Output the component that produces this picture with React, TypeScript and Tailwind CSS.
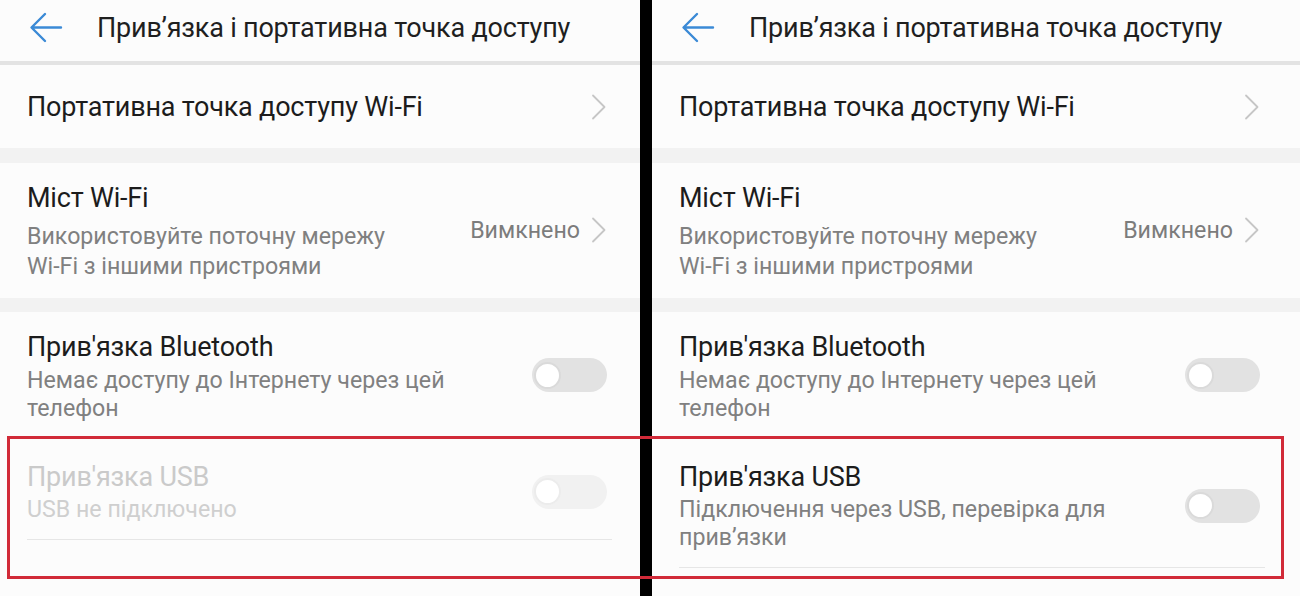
import React from "react";

function Chevron() {
  return (
    <svg width="16" height="26" viewBox="0 0 16 26" fill="none" className="shrink-0">
      <path d="M2 1.5 L13.5 13 L2 24.5" stroke="#c6c6c6" strokeWidth="1.8" strokeLinecap="round" strokeLinejoin="round" />
    </svg>
  );
}

function BackArrow() {
  return (
    <svg width="34" height="32" viewBox="0 0 34 32" fill="none" className="shrink-0">
      <path d="M32 15.5 H3 M16 2 L2.5 15.5 L16 29" stroke="#3b8ad6" strokeWidth="2.4" strokeLinecap="round" strokeLinejoin="round" />
    </svg>
  );
}

function Toggle({ disabled }: { disabled?: boolean }) {
  return (
    <div
      className={`w-[75px] h-[34px] rounded-full flex items-center pl-[2px] shrink-0 ${
        disabled ? "bg-[#f1f1f1]" : "bg-[#e2e2e2]"
      }`}
    >
      <div
        className={`w-[27px] h-[27px] rounded-full bg-white border-2 ${
          disabled ? "border-[#ececec]" : "border-[#dadada]"
        }`}
      />
    </div>
  );
}

function Panel({ right, usbEnabled }: { right: number; usbEnabled: boolean }) {
  const pr = right === 33 ? "pr-[33px]" : "pr-[40px]";
  return (
    <div className="flex flex-col h-[596px] bg-[#fcfcfc] overflow-hidden" style={{ width: right === 33 ? 640 : 648 }}>
      {/* header */}
      <div className={`h-[61px] flex items-center pl-[29px] ${pr} bg-[#fcfcfc]`}>
        <div className="-mt-[6px] flex items-center">
          <BackArrow />
          <div className="ml-[34px] text-[27px] leading-[34px] text-[#1f1f1f] tracking-[-0.2px] whitespace-nowrap">
            Прив’язка і портативна точка доступу
          </div>
        </div>
      </div>
      <div className="h-[4px] bg-[#e3e3e3]" />

      {/* row 1 */}
      <div className={`h-[83px] flex items-center justify-between pl-[27px] ${pr} bg-[#fcfcfc]`}>
        <div className="text-[27px] leading-[34px] text-[#1c1c1c] tracking-[-0.2px] mt-[1px]">Портативна точка доступу Wi-Fi</div>
        <Chevron />
      </div>
      <div className="h-[15px] bg-[#f2f2f2]" />

      {/* row 2 */}
      <div className={`h-[135px] flex items-center justify-between pl-[27px] ${pr} bg-[#fcfcfc]`}>
        <div className="flex flex-col">
          <div className="text-[27px] leading-[34px] text-[#1c1c1c] tracking-[-0.2px]">Міст Wi-Fi</div>
          <div className="mt-[6px] text-[23.2px] leading-[30px] text-[#808080]">
            Використовуйте поточну мережу
            <br />
            Wi-Fi з іншими пристроями
          </div>
        </div>
        <div className="flex items-center gap-[11px] mb-[2px]">
          <span className="text-[23.2px] leading-[30px] text-[#7c7c7c]">Вимкнено</span>
          <Chevron />
        </div>
      </div>
      <div className="h-[14px] bg-[#f2f2f2]" />

      {/* row 3 Bluetooth */}
      <div className={`h-[126px] flex items-center justify-between pl-[27px] ${pr} bg-[#fcfcfc]`}>
        <div className="flex flex-col mt-[2px]">
          <div className="text-[27px] leading-[34px] text-[#1c1c1c] tracking-[-0.2px]">Прив'язка Bluetooth</div>
          <div className="mt-[2px] text-[23.2px] leading-[28px] text-[#808080]">
            Немає доступу до Інтернету через цей
            <br />
            телефон
          </div>
        </div>
        <Toggle />
      </div>

      {/* row 4 USB */}
      <div className="flex flex-col pl-[27px] bg-[#fcfcfc]" style={{ paddingRight: right === 33 ? 28 : 35 }}>
        <div className="flex items-center justify-between pt-[22px] pb-[16px] pr-[5px]">
          <div className="flex flex-col">
            <div
              className={`text-[27px] leading-[34px] tracking-[-0.2px] ${
                usbEnabled ? "text-[#1c1c1c]" : "text-[#cacaca]"
              }`}
            >
              Прив'язка USB
            </div>
            {usbEnabled ? (
              <div className="mt-[1px] text-[23.2px] leading-[28px] text-[#808080]">
                Підключення через USB, перевірка для
                <br />
                прив’язки
              </div>
            ) : (
              <div className="mt-[1px] text-[23.2px] leading-[28px] text-[#cfcfcf]">USB не підключено</div>
            )}
          </div>
          <Toggle disabled={!usbEnabled} />
        </div>
        <div className="h-[1px] bg-[#e6e6e6]" />
      </div>
      <div className="flex-1 bg-[#fcfcfc]" />
    </div>
  );
}

export default function App() {
  return (
    <div
      className="relative w-[1300px] h-[596px] flex overflow-hidden bg-black"
      style={{ fontFamily: "Roboto, 'Noto Sans', sans-serif" }}
    >
      <Panel right={33} usbEnabled={false} />
      <div className="w-[12px] bg-black shrink-0" />
      <Panel right={40} usbEnabled={true} />
      <div className="absolute left-[7px] top-[436px] w-[1277px] h-[143px] border-[3px] border-[#d12a38] pointer-events-none" />
    </div>
  );
}
